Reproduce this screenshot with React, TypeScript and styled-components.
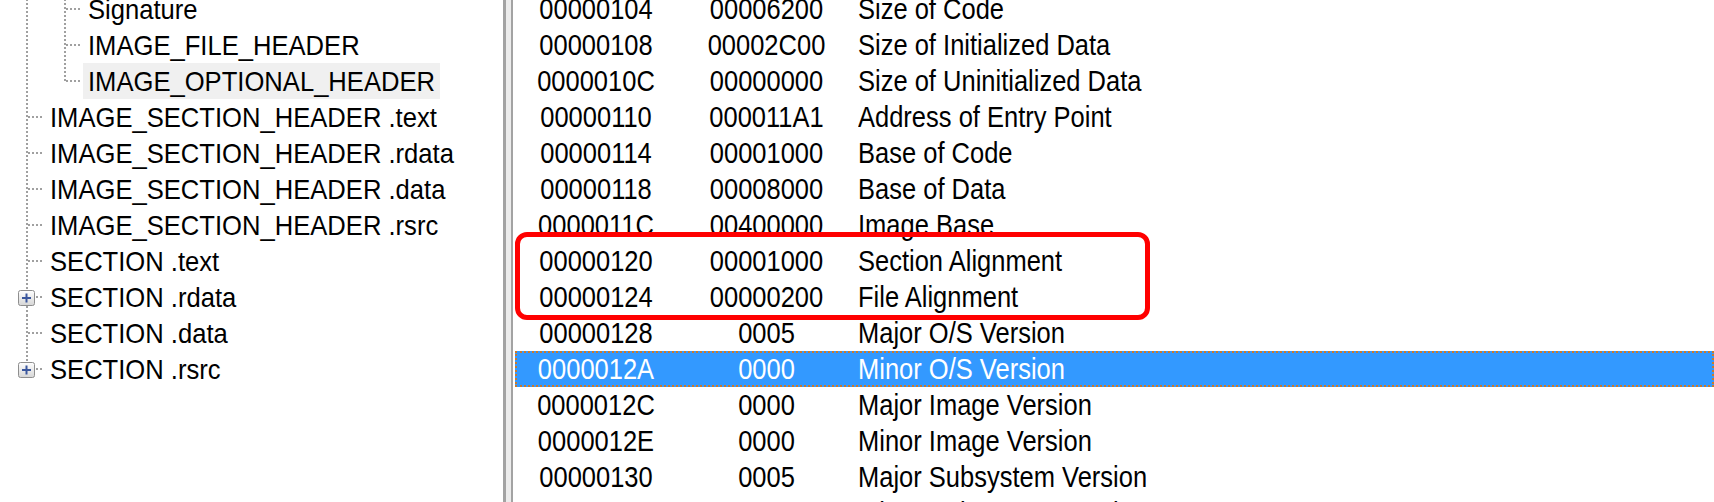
import React from "react";
import styled, { createGlobalStyle } from "styled-components";

interface TreeItem {
  label: string;
  level: 1 | 2;
  last?: boolean;
  expandable?: boolean;
  selected?: boolean;
}

interface FieldRow {
  offset: string;
  value: string;
  name: string;
}

const treeItems: TreeItem[] = [
  { label: "Signature", level: 2 },
  { label: "IMAGE_FILE_HEADER", level: 2 },
  { label: "IMAGE_OPTIONAL_HEADER", level: 2, last: true, selected: true },
  { label: "IMAGE_SECTION_HEADER .text", level: 1 },
  { label: "IMAGE_SECTION_HEADER .rdata", level: 1 },
  { label: "IMAGE_SECTION_HEADER .data", level: 1 },
  { label: "IMAGE_SECTION_HEADER .rsrc", level: 1 },
  { label: "SECTION .text", level: 1 },
  { label: "SECTION .rdata", level: 1, expandable: true },
  { label: "SECTION .data", level: 1 },
  { label: "SECTION .rsrc", level: 1, expandable: true, last: true },
];

const fields: FieldRow[] = [
  { offset: "00000104", value: "00006200", name: "Size of Code" },
  { offset: "00000108", value: "00002C00", name: "Size of Initialized Data" },
  { offset: "0000010C", value: "00000000", name: "Size of Uninitialized Data" },
  { offset: "00000110", value: "000011A1", name: "Address of Entry Point" },
  { offset: "00000114", value: "00001000", name: "Base of Code" },
  { offset: "00000118", value: "00008000", name: "Base of Data" },
  { offset: "0000011C", value: "00400000", name: "Image Base" },
  { offset: "00000120", value: "00001000", name: "Section Alignment" },
  { offset: "00000124", value: "00000200", name: "File Alignment" },
  { offset: "00000128", value: "0005", name: "Major O/S Version" },
  { offset: "0000012A", value: "0000", name: "Minor O/S Version" },
  { offset: "0000012C", value: "0000", name: "Major Image Version" },
  { offset: "0000012E", value: "0000", name: "Minor Image Version" },
  { offset: "00000130", value: "0005", name: "Major Subsystem Version" },
  { offset: "00000132", value: "0000", name: "Minor Subsystem Version" },
];

const SELECTED_ROW = 10;

const GlobalStyle = createGlobalStyle`
  html, body {
    margin: 0;
    padding: 0;
    background: #ffffff;
    overflow: hidden;
  }
`;

const DOT = { stroke: "#a0a0a0", strokeWidth: 2, strokeDasharray: "2 2" };

const PlusBox: React.FC = () => (
  <g>
    <defs>
      <linearGradient id="plusFill" x1="0" y1="0" x2="0" y2="1">
        <stop offset="0" stopColor="#ffffff" />
        <stop offset="1" stopColor="#d6d6d6" />
      </linearGradient>
    </defs>
    <rect x={18.5} y={11.5} width={16} height={15} rx={2} fill="url(#plusFill)" stroke="#8e8e8e" />
    <path d="M22 19h9M26.5 14.5v9" stroke="#3b579d" strokeWidth={2} />
  </g>
);

const TreeGuide: React.FC<{ item: TreeItem }> = ({ item }) => {
  if (item.level === 2) {
    return (
      <GuideSvg width={83} height={36}>
        <line x1={27} y1={0} x2={27} y2={36} {...DOT} />
        <line x1={65} y1={0} x2={65} y2={item.last ? 18 : 36} {...DOT} />
        <line x1={66} y1={18} x2={82} y2={18} {...DOT} />
      </GuideSvg>
    );
  }
  return (
    <GuideSvg width={45} height={36}>
      {item.expandable ? (
        <>
          <line x1={27} y1={0} x2={27} y2={11} {...DOT} />
          {!item.last && <line x1={27} y1={27} x2={27} y2={36} {...DOT} />}
          <line x1={36} y1={18} x2={44} y2={18} {...DOT} />
          <PlusBox />
        </>
      ) : (
        <>
          <line x1={27} y1={0} x2={27} y2={item.last ? 18 : 36} {...DOT} />
          <line x1={28} y1={18} x2={44} y2={18} {...DOT} />
        </>
      )}
    </GuideSvg>
  );
};

const App: React.FC = () => {
  return (
    <>
      <GlobalStyle />
      <Window>
        <TreePane>
          <TreeList>
            {treeItems.map((item) => (
              <TreeRow key={item.label}>
                <TreeGuide item={item} />
                <TreeLabel $selected={item.selected}>
                  <Tall $ratio={1.08}>{item.label}</Tall>
                </TreeLabel>
              </TreeRow>
            ))}
          </TreeList>
        </TreePane>
        <Splitter />
        <ListPane>
          <ListRows>
            {fields.map((row, i) => (
              <ListRow key={row.offset} $selected={i === SELECTED_ROW}>
                <CenterCell>
                  <Tall $ratio={1.13}>{row.offset}</Tall>
                </CenterCell>
                <CenterCell>
                  <Tall $ratio={1.13}>{row.value}</Tall>
                </CenterCell>
                <NameCell>
                  <Tall $ratio={1.13}>{row.name}</Tall>
                </NameCell>
              </ListRow>
            ))}
          </ListRows>
          <Highlight />
        </ListPane>
      </Window>
    </>
  );
};

const Window = styled.div`
  display: flex;
  width: 1714px;
  height: 502px;
  overflow: hidden;
  background: #ffffff;
  font-family: "Liberation Sans", Arial, sans-serif;
  color: #000000;
`;

const TreePane = styled.div`
  width: 503px;
  flex-shrink: 0;
  overflow: hidden;
`;

const TreeList = styled.div`
  display: flex;
  flex-direction: column;
  margin-top: -9px;
`;

const TreeRow = styled.div`
  display: flex;
  align-items: center;
  height: 36px;
`;

const GuideSvg = styled.svg`
  display: block;
  flex-shrink: 0;
`;

const TreeLabel = styled.span<{ $selected?: boolean }>`
  display: flex;
  align-items: center;
  height: 36px;
  padding: 0 5px;
  font-size: 25.6px;
  white-space: nowrap;
  background: ${(p) => (p.$selected ? "#f0f0f0" : "transparent")};
`;

const Tall = styled.span<{ $ratio: number }>`
  display: inline-block;
  transform: scaleY(${(p) => p.$ratio});
`;

const Splitter = styled.div`
  width: 5px;
  flex-shrink: 0;
  background: #ececec;
  border-left: 3px solid #a3a3a3;
  border-right: 2px solid #a3a3a3;
`;

const ListPane = styled.div`
  position: relative;
  flex: 1;
  overflow: hidden;
  padding-left: 2px;
`;

const ListRows = styled.div`
  display: flex;
  flex-direction: column;
  margin-top: -9px;
`;

const ListRow = styled.div<{ $selected?: boolean }>`
  display: grid;
  grid-template-columns: 158px 183px 1fr;
  align-items: center;
  height: 36px;
  box-sizing: border-box;
  font-size: 25.5px;
  white-space: nowrap;
  color: ${(p) => (p.$selected ? "#ffffff" : "#000000")};
  background: ${(p) => (p.$selected ? "#3399ff" : "transparent")};
  border: 2px dotted ${(p) => (p.$selected ? "#c97a2c" : "transparent")};
`;

const CenterCell = styled.div`
  display: flex;
  justify-content: center;
`;

const NameCell = styled.div`
  display: flex;
`;

const Highlight = styled.div`
  position: absolute;
  left: 2px;
  top: 232px;
  width: 635px;
  height: 88px;
  box-sizing: border-box;
  border: 5px solid #ff0000;
  border-radius: 12px;
  pointer-events: none;
`;

export default App;
